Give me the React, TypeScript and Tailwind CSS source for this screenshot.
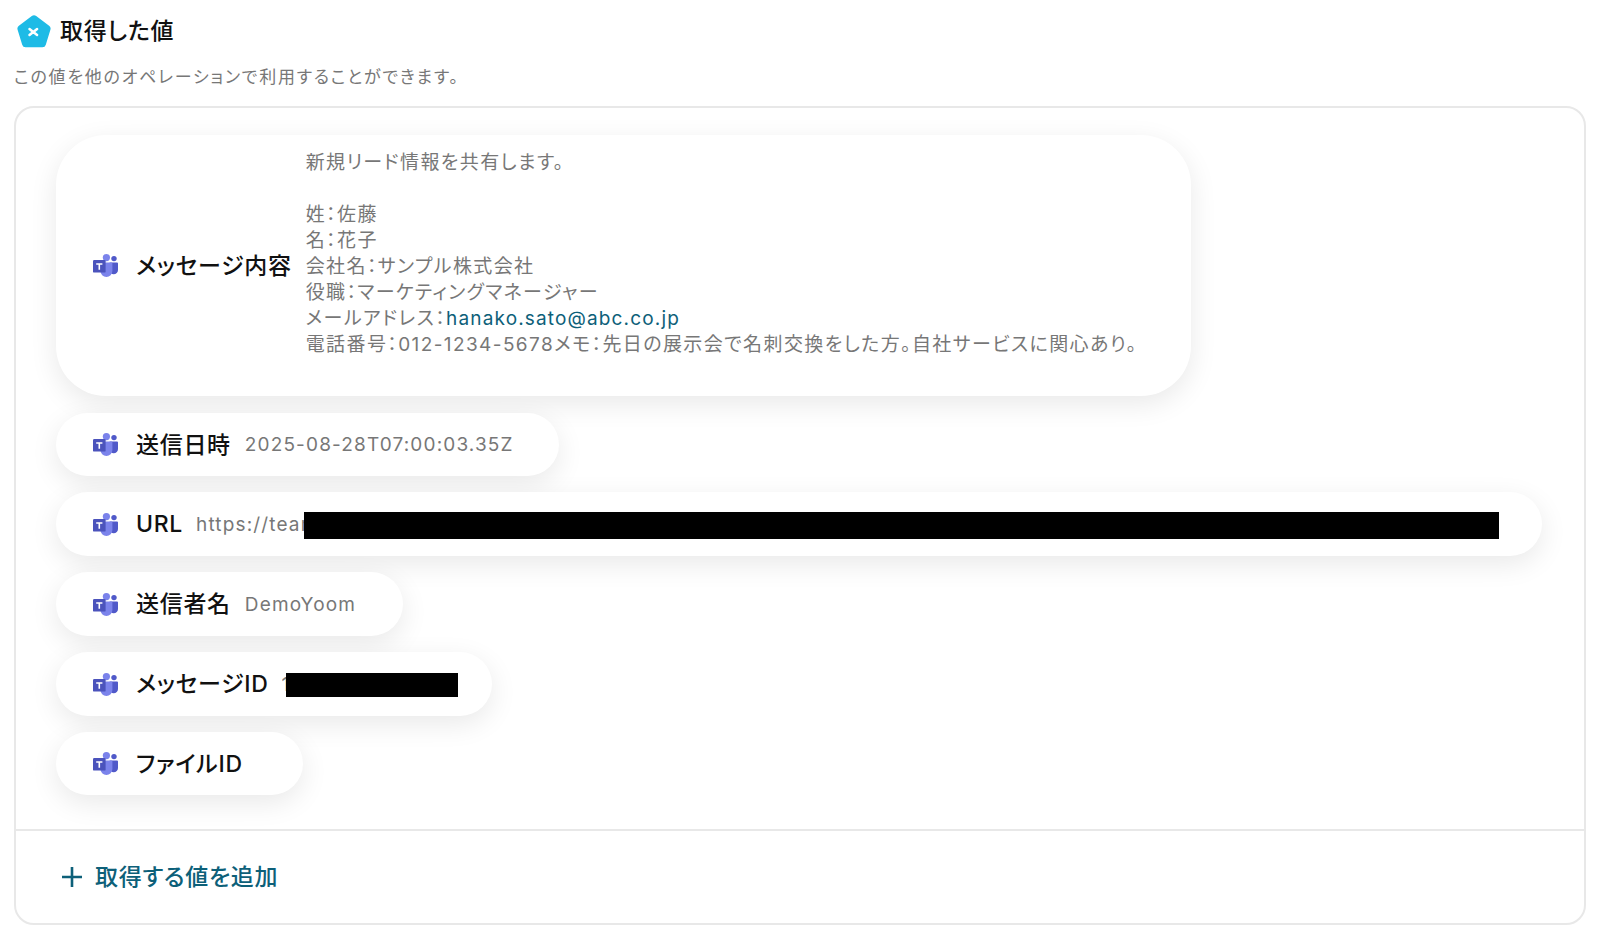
const pill = 'flex items-center bg-white pl-[38px] shadow-[0_8px_28px_rgba(0,0,0,0.09)]'
const label = 'ml-[18px] text-[23px] leading-[30px] font-medium tracking-[0.7px] text-[#111] whitespace-nowrap'
const value = 'text-[19px] leading-[26px] tracking-[1.15px] text-[#777] whitespace-nowrap'

function TeamsIcon() {
  return (
    <svg width="25" height="23" viewBox="0 0 25 23" className="shrink-0 -ml-px">
      <circle cx="21" cy="4.6" r="2.7" fill="#5059c9" />
      <path d="M17 8.5h7a1 1 0 0 1 1 1v6.4a4.3 4.3 0 0 1-4.3 4.3 4.3 4.3 0 0 1-4.3-4.3V9a.6.6 0 0 1 .6-.5z" fill="#5059c9" />
      <circle cx="13.4" cy="3.6" r="3.6" fill="#7b83eb" />
      <path d="M8.2 8.5h10.2a1 1 0 0 1 1 1v7.4a6 6 0 0 1-6 6 6 6 0 0 1-6-6V9.2a.7.7 0 0 1 .8-.7z" fill="#7b83eb" />
      <rect x="0" y="6" width="12.6" height="12.6" rx="1.2" fill="#4b53bc" />
      <path d="M9.4 9.2H3.2v1.5h2.3v5h1.6v-5h2.3z" fill="#fff" />
    </svg>
  )
}

function PentagonIcon() {
  return (
    <svg width="34" height="33" viewBox="0 0 34 33" className="shrink-0">
      <path
        d="M14.8 1.1a3.6 3.6 0 0 1 4.4 0l12.9 9.6a3.6 3.6 0 0 1 1.3 4l-4.6 15a3.6 3.6 0 0 1-3.5 2.6H8.7a3.6 3.6 0 0 1-3.5-2.6L.6 14.7a3.6 3.6 0 0 1 1.3-4z"
        fill="#1ebbe6"
      />
      <path d="M12.5 14l7.6 6M20.1 14l-7.6 6" stroke="#fff" strokeWidth="2.5" strokeLinecap="round" />
    </svg>
  )
}

export default function App() {
  return (
    <div className="h-[938px] overflow-hidden bg-white px-[14px] pt-[15px] font-['Inter','Noto_Sans_CJK_JP',sans-serif] [font-feature-settings:'palt']">
      <div className="flex h-[33px] items-center gap-[9px] pl-[3px]">
        <PentagonIcon />
        <h1 className="-mt-[2px] text-[23px] leading-[30px] font-medium tracking-[0.8px] text-[#111]">取得した値</h1>
      </div>
      <p className="mt-[17px] text-[17px] leading-[24px] tracking-[1.75px] text-[#777]">
        この値を他のオペレーションで利用することができます。
      </p>

      <div className="mt-[17px] h-[819px] rounded-[20px] border-2 border-[#e8e8e8]">
        <div className="flex h-[721px] flex-col gap-[16px] pl-[40px] pt-[27px]">
          <div className={`${pill} mb-px h-[261px] w-[1135px] rounded-[50px]`}>
            <TeamsIcon />
            <span className={label}>メッセージ内容</span>
            <div className="ml-[14px] -mt-[24px] text-[19px] leading-[26px] tracking-[1.4px] whitespace-nowrap text-[#777]">
              <p>新規リード情報を共有します。</p>
              <p className="h-[26px]"></p>
              <p>姓：佐藤</p>
              <p>名：花子</p>
              <p>会社名：サンプル株式会社</p>
              <p>役職：マーケティングマネージャー</p>
              <p>
                メールアドレス：<span className="tracking-[1.15px] text-[#0d6079]">hanako.sato@abc.co.jp</span>
              </p>
              <p>電話番号：012-1234-5678メモ：先日の展示会で名刺交換をした方。自社サービスに関心あり。</p>
            </div>
          </div>

          <div className={`${pill} h-[63px] w-[503px] rounded-[32px]`}>
            <TeamsIcon />
            <span className={label}>送信日時</span>
            <span className={`${value} ml-[14px]`}>2025-08-28T07:00:03.35Z</span>
          </div>

          <div className={`${pill} h-[64px] w-[1486px] rounded-[32px]`}>
            <TeamsIcon />
            <span className={label}>URL</span>
            <span className={`${value} ml-[13px] mt-[2px] w-[108px] overflow-hidden`}>https://teams</span>
            <span className="mt-[2px] h-[27px] w-[1195px] bg-black"></span>
          </div>

          <div className={`${pill} h-[64px] w-[347px] rounded-[32px]`}>
            <TeamsIcon />
            <span className={label}>送信者名</span>
            <span className={`${value} ml-[14px] mt-[2px]`}>DemoYoom</span>
          </div>

          <div className={`${pill} h-[64px] w-[436px] rounded-[32px]`}>
            <TeamsIcon />
            <span className={label}>メッセージID</span>
            <span className={`${value} ml-[13px] mt-[2px] w-[4px] overflow-hidden`}>1</span>
            <span className="mt-[2px] h-[24px] w-[172px] bg-black"></span>
          </div>

          <div className={`${pill} h-[63px] w-[247px] rounded-[32px]`}>
            <TeamsIcon />
            <span className={label}>ファイルID</span>
          </div>
        </div>

        <div className="flex h-[94px] items-center gap-[12px] border-t-2 border-[#e8e8e8] pb-[1px] pl-[45px]">
          <svg width="22" height="22" viewBox="0 0 22 22" className="shrink-0">
            <path d="M11 1v20M1 11h20" stroke="#0d6079" strokeWidth="2.6" />
          </svg>
          <span className="text-[23px] leading-[30px] font-medium tracking-[0.7px] text-[#0d6079]">取得する値を追加</span>
        </div>
      </div>
    </div>
  )
}
